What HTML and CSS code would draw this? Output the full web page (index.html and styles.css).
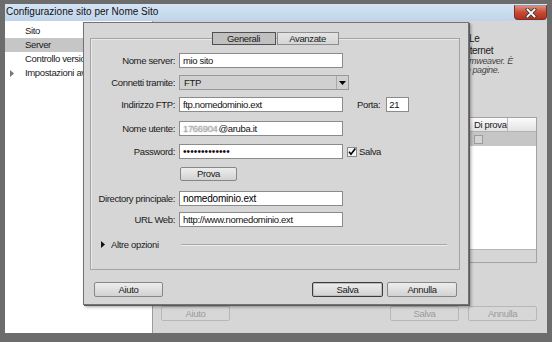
FILE: index.html
```html
<!DOCTYPE html>
<html lang="it">
<head>
    <meta charset="UTF-8">
    <title>Configurazione sito per Nome Sito</title>
    <link rel="stylesheet" href="styles.css">
</head>
<body>
<div class="window">
    <div class="titlebar">
        <span class="title">Configurazione sito per Nome Sito</span>
        <span class="close">
            <svg width="12" height="10" viewBox="0 0 12 10">
                <path d="M2.5 1.5 L9.5 8.5 M9.5 1.5 L2.5 8.5" stroke="#3b3b3b" stroke-width="3.6" stroke-linecap="square"/>
                <path d="M2.5 1.5 L9.5 8.5 M9.5 1.5 L2.5 8.5" stroke="#fff" stroke-width="1.8" stroke-linecap="square"/>
            </svg>
        </span>
    </div>

    <div class="content">
        <ul class="sidebar">
            <li>Sito</li>
            <li class="selected">Server</li>
            <li>Controllo versione</li>
            <li><svg class="tri" width="4" height="7" viewBox="0 0 4 7"><polygon points="0,0 4,3.5 0,7" fill="#777"/></svg>Impostazioni avanzate</li>
        </ul>

        <div class="panel">
            <div class="info">
                <p class="line">Le</p>
                <p class="line cut-in">Internet</p>
                <p class="note cut-drea">Dreamweaver. È</p>
                <p class="note cut-le">le pagine.</p>
            </div>

            <div class="servers">
                <div class="srv-head">
                    <span>Nome</span><span>Indirizzo</span><span>Connessione</span><span>Remoto</span><span>Di prova</span><span></span>
                </div>
                <div class="srv-row">
                    <span>mio sito</span><span>ftp.nomedominio.ext</span><span>FTP</span><span><i class="box"></i></span><span><i class="box"></i></span><span></span>
                </div>
                <div class="srv-body"></div>
                <div class="srv-foot"></div>
            </div>

            <div class="panel-buttons">
                <span class="btn off">Aiuto</span>
                <span class="spacer"></span>
                <span class="btn off">Salva</span>
                <span class="btn off">Annulla</span>
            </div>
        </div>
    </div>

    <div class="dialog">
        <div class="group">
            <div class="tabs">
                <span class="tab active">Generali</span>
                <span class="tab">Avanzate</span>
            </div>

            <div class="row">
                <label>Nome server:</label>
                <span class="field">mio sito</span>
            </div>
            <div class="row">
                <label>Connetti tramite:</label>
                <span class="select">FTP<span class="drop"><svg width="7" height="4" viewBox="0 0 7 4"><polygon points="0,0 7,0 3.5,4" fill="#000"/></svg></span></span>
            </div>
            <div class="row wide">
                <label>Indirizzo FTP:</label>
                <span class="field">ftp.nomedominio.ext</span>
                <label class="porta">Porta:</label>
                <span class="field port">21</span>
            </div>
            <div class="row mid">
                <label>Nome utente:</label>
                <span class="field"><span class="blur">1766904</span>@aruba.it</span>
            </div>
            <div class="row">
                <label>Password:</label>
                <span class="field dots">•••••••••••••</span>
                <span class="check">
                    <svg width="10" height="10" viewBox="0 0 10 10"><rect x="0.5" y="0.5" width="9" height="9" fill="#f4f4f4" stroke="#8a8a8a"/><path d="M2 4.8 L4 7.3 L8.3 1.5" fill="none" stroke="#000" stroke-width="1.6"/></svg>
                    Salva
                </span>
            </div>
            <div class="row wider">
                <label></label>
                <span class="btn prova">Prova</span>
            </div>
            <div class="row tight">
                <label>Directory principale:</label>
                <span class="field strong">nomedominio.ext</span>
            </div>
            <div class="row">
                <label>URL Web:</label>
                <span class="field">http://www.nomedominio.ext</span>
            </div>

            <div class="more">
                <span class="more-label"><svg width="4" height="7" viewBox="0 0 4 7"><polygon points="0,0 4,3.5 0,7" fill="#111"/></svg>Altre opzioni</span>
                <span class="rule"></span>
            </div>
        </div>

        <div class="dialog-buttons">
            <span class="btn">Aiuto</span>
            <span class="spacer"></span>
            <span class="btn default">Salva</span>
            <span class="btn">Annulla</span>
        </div>
    </div>
</div>
</body>
</html>
```

FILE: styles.css
```css
* {
    box-sizing: border-box;
}

body {
    margin: 0;
    font-family: "Liberation Sans", Arial, sans-serif;
    font-size: 9.5px;
    letter-spacing: -0.35px;
    color: #1a1a1a;
    background: #6c6c6c;
}

.window {
    position: relative;
    width: 552px;
    height: 342px;
    padding: 4px 5px 9px 5px;
    background: #6c6c6c;
    display: flex;
    flex-direction: column;
}

/* title bar */
.titlebar {
    height: 17px;
    display: flex;
    align-items: flex-start;
    background: linear-gradient(#d5e4f4, #bfd4ea);
}

.title {
    font-size: 10px;
    letter-spacing: 0;
    line-height: 16px;
    padding-left: 1px;
    color: #111;
}

.close {
    margin-left: auto;
    margin-top: 1px;
    width: 33px;
    height: 15px;
    display: flex;
    align-items: center;
    justify-content: center;
    background: linear-gradient(#dd8c7c, #c74a34 50%, #b2301c);
    border: 1px solid #7d3025;
    border-top-color: #9a9a9a;
    border-radius: 0 0 4px 4px;
}

/* main window */
.content {
    flex: 1;
    display: flex;
    min-height: 0;
}

.sidebar {
    width: 148px;
    margin: 0;
    padding: 3px 0 0 0;
    list-style: none;
    background: #fff;
    border-right: 1px solid #9d9d9d;
}

.sidebar li {
    height: 14px;
    line-height: 14px;
    padding-left: 20px;
    white-space: nowrap;
    position: relative;
}

.sidebar li.selected {
    background: #c6c6c6;
}

.sidebar .tri {
    position: absolute;
    left: 5px;
    top: 4px;
}

.panel {
    flex: 1;
    background: #d6d6d6;
    display: flex;
    flex-direction: column;
    padding: 0 10px 12px 8px;
    overflow: hidden;
}

.info {
    height: 96px;
    padding-top: 12px;
    padding-left: 308px;
    white-space: nowrap;
}

.info p {
    margin: 0;
}

.line {
    line-height: 12px;
    height: 12px;
    font-size: 10px;
}

.cut-in {
    text-indent: -7px;
}

.note {
    font-style: italic;
    font-size: 9px;
    line-height: 9px;
    height: 9px;
    color: #444;
}

.cut-drea {
    margin-top: 18px;
    text-indent: -18px;
}

.cut-le {
    text-indent: -5px;
}

/* server list of the window behind */
.servers {
    height: 146px;
    display: flex;
    flex-direction: column;
    border: 1px solid #a3a3a3;
    background: #fff;
}

.srv-head,
.srv-row {
    display: grid;
    grid-template-columns: 90px 110px 60px 48px 38px 1fr;
    white-space: nowrap;
}

.srv-head {
    height: 14px;
    line-height: 13px;
    background: linear-gradient(#fbfbfb, #e3e3e3);
    border-bottom: 1px solid #b3b3b3;
}

.srv-head span {
    padding-left: 4px;
    border-right: 1px solid #b8b8b8;
    overflow: hidden;
}

.srv-head span:last-child {
    border-right: none;
}

.srv-row {
    height: 14px;
    line-height: 14px;
    background: #c6c6c6;
}

.srv-row span {
    padding-left: 4px;
    overflow: hidden;
}

.box {
    display: inline-block;
    width: 9px;
    height: 9px;
    margin-top: 3px;
    vertical-align: top;
    border: 1px solid #9c9c9c;
    background: #d4d4d4;
}

.srv-body {
    flex: 1;
}

.srv-foot {
    height: 13px;
    background: #d6d6d6;
    border-top: 1px solid #b5b5b5;
}

.panel-buttons {
    margin-top: auto;
    display: flex;
    gap: 9px;
}

.spacer {
    flex: 1;
}

/* buttons */
.btn {
    display: inline-block;
    width: 70px;
    height: 15px;
    line-height: 13px;
    text-align: center;
    border: 1px solid #878787;
    border-radius: 2px;
    background: linear-gradient(#ededed, #d2d2d2);
    color: #1a1a1a;
}

.btn.off {
    width: 69px;
    color: #9b9b9b;
    background: #d7d7d7;
    border-color: #b7b7b7;
}

.btn.default {
    border-color: #3c3c3c;
    box-shadow: inset 0 0 0 1px #bdbdbd;
}

/* dialog floating over the window */
.dialog {
    position: absolute;
    left: 83px;
    top: 22px;
    width: 386px;
    height: 283px;
    padding: 15px 8px 0 6px;
    background: #d6d6d6;
    border: 1px solid #737373;
    box-shadow: 1px 1px 0 #5a5a5a, 2px 2px 3px rgba(0, 0, 0, 0.35);
}

.group {
    height: 232px;
    border: 1px solid #a4a4a4;
    box-shadow: inset 1px 1px 0 #e9e9e9;
    padding: 0 0 0 3px;
}

.tabs {
    display: flex;
    justify-content: center;
    gap: 1px;
    margin: -7px 0 8px -3px;
}

.tab {
    height: 13px;
    line-height: 11px;
    text-align: center;
    border: 1px solid #8d8d8d;
    background: linear-gradient(#e4e4e4, #d6d6d6);
}

.tab:first-child {
    width: 64px;
}

.tab:last-child {
    width: 62px;
}

.tab.active {
    background: #c0c0c0;
    border-color: #505050;
}

.row {
    display: flex;
    align-items: center;
    height: 15px;
    margin-bottom: 7px;
    white-space: nowrap;
}

.row.mid {
    margin-bottom: 8px;
}

.row.wide {
    margin-bottom: 9px;
}

.row.wider {
    margin-bottom: 10px;
}

.row.tight {
    margin-bottom: 6px;
}

.row label {
    width: 81px;
    flex-shrink: 0;
    margin-right: 4px;
    display: flex;
    justify-content: flex-end;
}

.field {
    width: 164px;
    height: 15px;
    line-height: 13px;
    padding-left: 3px;
    border: 1px solid #8b8b8b;
    background: #fff;
    color: #111;
    overflow: hidden;
}

.field.strong {
    font-size: 10px;
    letter-spacing: -0.2px;
    color: #000;
}

.select {
    position: relative;
    width: 170px;
    height: 15px;
    line-height: 13px;
    padding-left: 4px;
    border: 1px solid #999;
    background: #d0d0d0;
}

.drop {
    position: absolute;
    right: 0;
    top: 0;
    width: 12px;
    height: 13px;
    display: flex;
    align-items: center;
    justify-content: center;
    border-left: 1px solid #a9a9a9;
}

.row label.porta {
    width: auto;
    margin: 0 6px 0 14px;
}

.field.port {
    width: 23px;
    padding-left: 2px;
}

.blur {
    margin-right: 1px;
    color: rgba(150, 150, 150, 0.55);
    text-shadow: 0 0 1.5px #9a9a9a;
}

.dots {
    font-size: 10px;
    letter-spacing: 0.1px;
}

.check {
    display: flex;
    align-items: center;
    gap: 2px;
    margin-left: 4px;
}

.btn.prova {
    width: 57px;
    height: 14px;
    line-height: 12px;
    margin-left: 1px;
}

.more {
    display: flex;
    align-items: center;
    margin-top: 12px;
}

.more-label {
    width: 87px;
    padding-left: 7px;
    display: flex;
    align-items: center;
    gap: 6px;
}

.rule {
    flex: 1;
    margin-right: 12px;
    border-top: 1px solid #a6a6a6;
    box-shadow: 0 1px 0 #ececec;
}

.dialog-buttons {
    display: flex;
    gap: 4px;
    margin: 12px 3px 0 4px;
}

.dialog-buttons .btn:first-child {
    width: 69px;
}

.dialog-buttons .btn.default {
    width: 71px;
}
```
